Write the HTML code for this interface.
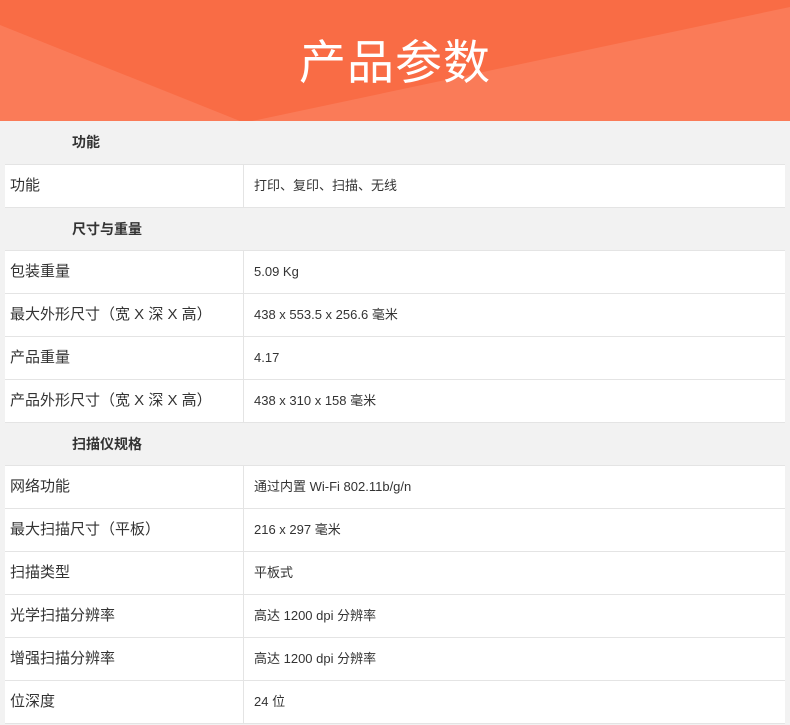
<!DOCTYPE html>
<html><head><meta charset="utf-8"><style>
*{margin:0;padding:0;box-sizing:border-box}
body{width:790px;height:725px;background:#f2f2f2;font-family:"Liberation Sans","Noto Sans CJK SC",sans-serif;color:#333;overflow:hidden}
.banner{position:relative;height:121px;background:#f96c45;overflow:hidden}
.banner svg{position:absolute;left:0;top:0}
.banner h1{position:absolute;left:0;right:0;top:33px;text-align:center;color:#fff;font-weight:normal;font-size:47px;line-height:60px;letter-spacing:1px}
.sec{margin:0 5px;height:43px;line-height:43px;padding-left:67px;font-size:14px;font-weight:bold;color:#333;border-top:1px solid #e4e4e4}
.sec.first{border-top:none}
.row{margin:0 5px;height:43px;background:#fff;border-top:1px solid #e4e4e4;display:flex}
.row .l{width:239px;border-right:1px solid #e4e4e4;padding-left:5px;line-height:42px;font-size:15px}
.row .r{padding-left:10px;line-height:42px;font-size:13px}
.end{margin:0 5px;border-top:1px solid #e4e4e4}
</style></head><body>
<div class="banner">
<svg width="790" height="121"><polygon points="0,25 240,121 0,121" fill="#fa7b58"/><polygon points="790,7 790,121 252,121" fill="#fa7b58"/></svg>
<h1>产品参数</h1>
</div>
<div class="sec first">功能</div>
<div class="row"><div class="l">功能</div><div class="r">打印、复印、扫描、无线</div></div>
<div class="sec">尺寸与重量</div>
<div class="row"><div class="l">包装重量</div><div class="r">5.09 Kg</div></div>
<div class="row"><div class="l">最大外形尺寸（宽 X 深 X 高）</div><div class="r">438 x 553.5 x 256.6 毫米</div></div>
<div class="row"><div class="l">产品重量</div><div class="r">4.17</div></div>
<div class="row"><div class="l">产品外形尺寸（宽 X 深 X 高）</div><div class="r">438 x 310 x 158 毫米</div></div>
<div class="sec">扫描仪规格</div>
<div class="row"><div class="l">网络功能</div><div class="r">通过内置 Wi-Fi 802.11b/g/n</div></div>
<div class="row"><div class="l">最大扫描尺寸（平板）</div><div class="r">216 x 297 毫米</div></div>
<div class="row"><div class="l">扫描类型</div><div class="r">平板式</div></div>
<div class="row"><div class="l">光学扫描分辨率</div><div class="r">高达 1200 dpi 分辨率</div></div>
<div class="row"><div class="l">增强扫描分辨率</div><div class="r">高达 1200 dpi 分辨率</div></div>
<div class="row"><div class="l">位深度</div><div class="r">24 位</div></div>
<div class="end"></div>
</body></html>
